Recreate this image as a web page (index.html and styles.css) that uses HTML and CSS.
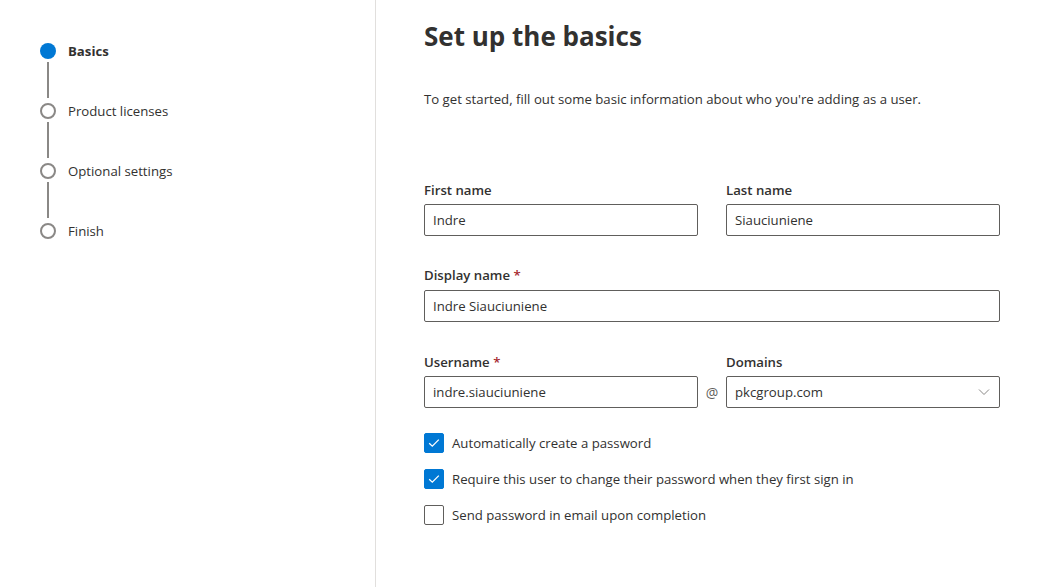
FILE: index.html
```html
<!DOCTYPE html>
<html>
<head>
<meta charset="utf-8">
<link rel="stylesheet" href="styles.css">
</head>
<body>
<div class="page">
  <nav class="sidebar">
    <div class="step current"><span class="dot"></span><span class="step-label">Basics</span></div>
    <div class="connector"></div>
    <div class="step"><span class="dot"></span><span class="step-label">Product licenses</span></div>
    <div class="connector"></div>
    <div class="step"><span class="dot"></span><span class="step-label">Optional settings</span></div>
    <div class="connector"></div>
    <div class="step"><span class="dot"></span><span class="step-label">Finish</span></div>
  </nav>
  <main class="main">
    <h1 class="title">Set up the basics</h1>
    <p class="intro">To get started, fill out some basic information about who you're adding as a user.</p>

    <div class="row two">
      <div class="field">
        <label class="label">First name</label>
        <div class="input">Indre</div>
      </div>
      <div class="field">
        <label class="label">Last name</label>
        <div class="input">Siauciuniene</div>
      </div>
    </div>

    <div class="row">
      <div class="field">
        <label class="label">Display name <span class="req">*</span></label>
        <div class="input">Indre Siauciuniene</div>
      </div>
    </div>

    <div class="row user">
      <div class="field">
        <label class="label">Username <span class="req">*</span></label>
        <div class="input">indre.siauciuniene</div>
      </div>
      <div class="at">@</div>
      <div class="field">
        <label class="label">Domains</label>
        <div class="input select">
          <span>pkcgroup.com</span>
          <svg class="chev" width="12" height="8" viewBox="0 0 12 8"><path d="M1 1.5 L6 6.5 L11 1.5" fill="none" stroke="#8a8886" stroke-width="1"/></svg>
        </div>
      </div>
    </div>

    <div class="checks">
      <div class="check on"><span class="box"><svg width="12" height="10" viewBox="0 0 12 10"><path d="M1.2 5.2 L4.3 8.2 L10.8 1.6" fill="none" stroke="#fff" stroke-width="1.3"/></svg></span><span>Automatically create a password</span></div>
      <div class="check on"><span class="box"><svg width="12" height="10" viewBox="0 0 12 10"><path d="M1.2 5.2 L4.3 8.2 L10.8 1.6" fill="none" stroke="#fff" stroke-width="1.3"/></svg></span><span>Require this user to change their password when they first sign in</span></div>
      <div class="check"><span class="box"></span><span>Send password in email upon completion</span></div>
    </div>
  </main>
</div>
</body>
</html>
```

FILE: styles.css
```css
* { box-sizing: border-box; }
html, body { margin: 0; padding: 0; background: #fff; }
body {
  font-family: "Segoe UI", "Open Sans", "Noto Sans", sans-serif;
  color: #323130;
  font-size: 13.2px;
}
.page {
  display: flex;
  height: 587px;
}
.sidebar {
  width: 376px;
  flex: none;
  border-right: 1px solid #e1dfdd;
  padding: 43px 0 0 40px;
  display: flex;
  flex-direction: column;
}
.step {
  display: flex;
  align-items: center;
  height: 16px;
}
.dot {
  width: 16px;
  height: 16px;
  border-radius: 50%;
  border: 2px solid #8a8886;
  background: #fff;
  flex: none;
}
.step.current .dot {
  border: none;
  background: #0078d4;
}
.step-label {
  margin-left: 12px;
  font-size: 13.2px;
  color: #323130;
  line-height: 16px;
}
.step.current .step-label { font-weight: 700; }
.connector {
  width: 2px;
  height: 36px;
  background: #8a8886;
  margin: 3px 0 5px 7px;
}
.main {
  padding: 18px 0 0 48px;
  width: 624px;
}
.title {
  margin: 0;
  font-size: 26px;
  font-weight: 700;
  line-height: 36px;
  color: #323130;
}
.intro {
  margin: 36px 0 0;
  font-size: 13.2px;
  line-height: 18px;
}
.row {
  display: grid;
  grid-template-columns: 576px;
  margin-top: 0;
}
.row.two {
  grid-template-columns: 274px 274px;
  column-gap: 28px;
  margin-top: 72px;
}
.row + .row { margin-top: 29px; }
.row.user {
  grid-template-columns: 274px 28px 274px;
  margin-top: 30px;
}
.field { display: flex; flex-direction: column; }
.label {
  font-size: 13.2px;
  font-weight: 600;
  line-height: 20px;
  margin-bottom: 4px;
}
.row + .row .label { margin-bottom: 5px; }
.row.user .label { margin-bottom: 4px; }
.req { color: #a4262c; }
.input {
  height: 32px;
  border: 1px solid #605e5c;
  border-radius: 2px;
  padding: 0 8px;
  display: flex;
  align-items: center;
  font-size: 13.2px;
}
.select { justify-content: space-between; padding-right: 9px; }
.at {
  align-self: end;
  height: 32px;
  display: flex;
  align-items: center;
  justify-content: center;
  color: #605e5c;
  font-size: 14px;
}
.checks {
  margin-top: 25px;
  display: flex;
  flex-direction: column;
  gap: 16px;
}
.check {
  display: flex;
  align-items: center;
  height: 20px;
}
.box {
  width: 20px;
  height: 20px;
  border: 1px solid #605e5c;
  border-radius: 2px;
  margin-right: 8px;
  display: flex;
  align-items: center;
  justify-content: center;
  flex: none;
}
.check.on .box {
  background: #0078d4;
  border-color: #0078d4;
}
```
